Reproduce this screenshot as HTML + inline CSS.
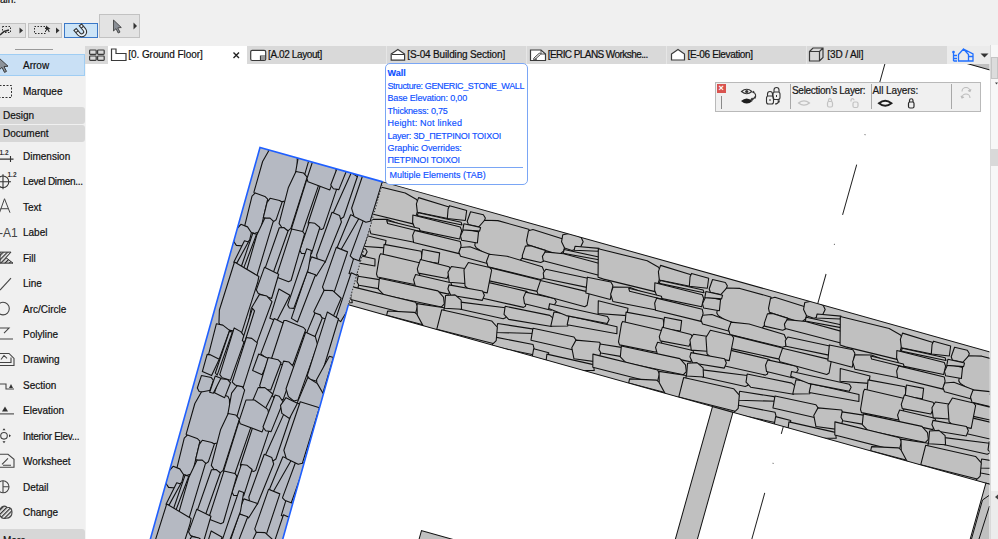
<!DOCTYPE html><html><head><meta charset="utf-8"><style>
html,body{margin:0;padding:0}
body{width:998px;height:539px;overflow:hidden;position:relative;background:#f0f0f0;font-family:"Liberation Sans",sans-serif}
.a{position:absolute}
.btn{position:absolute;background:#e3e3e3;border:1px solid #c2c2c2;box-sizing:border-box}
.btn.sel{background:#cce4f7;border:1px solid #3a78c8}
.t{position:absolute;white-space:pre;font-size:10px;color:#111;line-height:12px;-webkit-text-stroke:0.2px #111}
.tt{position:absolute;white-space:pre;font-size:9px;color:#0d50ff;line-height:12px;letter-spacing:0px;-webkit-text-stroke:0.15px #0d50ff}
</style></head><body>
<div class="t" style="left:0;top:-6px;font-size:10px">ain:</div>
<div class="btn" style="left:-8px;top:23px;width:34px;height:15px"></div>
<div class="btn" style="left:28px;top:23px;width:34px;height:15px"></div>
<div class="btn sel" style="left:64px;top:23px;width:34px;height:15px"></div>
<div class="btn" style="left:99px;top:14px;width:41px;height:24px"></div>
<svg class="a" style="left:0;top:0" width="150" height="45">
<g fill="#333"><path d="M19.5,27.5 l3.5,3 l-3.5,3z"/><path d="M56,27.5 l3.5,3 l-3.5,3z"/><path d="M133.5,22.5 l3.5,3.5 l-3.5,3.5z"/></g>
<g fill="none" stroke="#2e2e2e" stroke-width="1" stroke-dasharray="1.5 1.5">
<rect x="2.5" y="26.5" width="8" height="6"/>
<rect x="34.5" y="26.5" width="11" height="7"/>
</g>
<path d="M0,35 L4,31.5 L9,30" stroke="#2e2e2e" stroke-width="1.5" fill="none"/>
<path d="M46,25.5 l0,5.5 l1.5,-1.3 l1.3,2.5 l1,-0.5 l-1.3,-2.4 l2,-0.2z" fill="#2e2e2e"/>
<g transform="rotate(-40 81 31)"><path d="M76,26 v6 a5,5 0 0 0 10,0 v-6 h-3 v6 a2,2 0 0 1 -4,0 v-6z" fill="#e8f2fb" stroke="#333" stroke-width="1.1"/><path d="M76,29 h3 M83,29 h3" stroke="#333" stroke-width="1"/></g>
<path d="M113.5,20 l0,11 l2.5,-2.3 l2.2,4.3 l1.8,-0.9 l-2.2,-4.2 l3.5,-0.4z" fill="#8a8f96" stroke="#333" stroke-width="0.8"/>
</svg>
<div class="a" style="left:0;top:45px;width:85px;height:494px;background:#f0f0f0"></div>
<div class="a" style="left:15px;top:49px;width:38px;height:1px;background:#9a9a9a"></div>
<div class="a" style="left:0;top:53.5px;width:85px;height:22.5px;background:#c9e0f5;border:1px solid #9fcdf3;border-left:none;box-sizing:border-box"></div>
<div class="a" style="left:0;top:107px;width:85px;height:16.7px;background:#d7d7d7;border-radius:0 3px 3px 0"></div>
<div class="a" style="left:0;top:125px;width:85px;height:16.5px;background:#d7d7d7;border-radius:0 3px 3px 0"></div>
<div class="a" style="left:0;top:529px;width:85px;height:16px;background:#d7d7d7;border-radius:0 3px 3px 0"></div>
<div class="t" style="left:23px;top:60.3px;">Arrow</div>

<div class="t" style="left:23px;top:85.5px;">Marquee</div>

<div class="t" style="left:3px;top:110.1px;">Design</div>

<div class="t" style="left:3px;top:127.8px;">Document</div>

<div class="t" style="left:3px;top:535.4px;">More</div>

<div class="t" style="left:23px;top:150.7px;">Dimension</div>

<div class="t" style="left:23px;top:176.2px;letter-spacing:-0.3px">Level Dimen...</div>

<div class="t" style="left:23px;top:201.6px;">Text</div>

<div class="t" style="left:23px;top:227.1px;">Label</div>

<div class="t" style="left:23px;top:252.5px;">Fill</div>

<div class="t" style="left:23px;top:278.0px;">Line</div>

<div class="t" style="left:23px;top:303.5px;">Arc/Circle</div>

<div class="t" style="left:23px;top:328.9px;">Polyline</div>

<div class="t" style="left:23px;top:354.4px;">Drawing</div>

<div class="t" style="left:23px;top:379.8px;">Section</div>

<div class="t" style="left:23px;top:405.3px;">Elevation</div>

<div class="t" style="left:23px;top:430.8px;letter-spacing:-0.3px">Interior Elev...</div>

<div class="t" style="left:23px;top:456.2px;">Worksheet</div>

<div class="t" style="left:23px;top:481.7px;">Detail</div>

<div class="t" style="left:23px;top:507.1px;">Change</div>

<svg class="a" style="left:0;top:0" width="85" height="539"><path d="M-1,58 l0,12 l3,-2.6 l2.5,5 l2,-1 l-2.5,-4.8 l4,-0.4z" fill="#8c9299" stroke="#2f2f2f" stroke-width="0.9"/><rect x="-0.5" y="85.5" width="12" height="12" fill="none" stroke="#333" stroke-dasharray="2 1.5"/><text x="-0.5" y="155.3" font-size="6.5" font-weight="bold" fill="#333">1.2</text><path d="M0,159.10000000000002 H13.5 M10.5,156.10000000000002 V162.10000000000002" stroke="#333" stroke-width="1.1"/><circle cx="3" cy="181.76000000000002" r="5.8" fill="none" stroke="#333" stroke-width="1.1"/><path d="M3,174.26000000000002 V189.26000000000002 M-4,181.76000000000002 H11" stroke="#333" stroke-width="1.1"/><text x="7.5" y="176.76000000000002" font-size="6.5" font-weight="bold" fill="#333">1.2</text><path d="M-0.5,212.72000000000003 L4.5,198.72000000000003 L10,212.72000000000003 M0.5,208.72000000000003 L8.5,208.72000000000003" fill="none" stroke="#444" stroke-width="1"/><text x="-1" y="237.18" font-size="12" fill="#444">-A1</text><defs><pattern id="hp" width="3" height="3" patternUnits="userSpaceOnUse" patternTransform="rotate(45)"><rect width="1.3" height="3" fill="#333"/></pattern></defs><path d="M0,252.14 H11 L6,257.64 L13,263.14 H0z" fill="url(#hp)" stroke="#333" stroke-width="1"/><path d="M0,290.1 L11,278.1" stroke="#444" stroke-width="1.1"/><circle cx="3" cy="308.56" r="6.3" fill="none" stroke="#444" stroke-width="1.1"/><path d="M0,328.02 H9 L4,333.02 M0,339.02 H13" fill="none" stroke="#444" stroke-width="1.1"/><path d="M0,353.48 H9 L14,358.48 V365.48 H0 M0,362.48 H11 V357.48 M1,359.48 L4,355.48 L7,358.48" fill="none" stroke="#444" stroke-width="1.1"/><path d="M0,383.94000000000005 H6 V388.94000000000005 H14" fill="none" stroke="#444" stroke-width="1.1"/><path d="M9,387.94000000000005 L11,383.94000000000005 L13,387.94000000000005z" fill="#333"/><path d="M2,411.40000000000003 L5,406.40000000000003 L8,411.40000000000003z" fill="#333"/><path d="M0,413.90000000000003 H14" stroke="#444" stroke-width="1.1"/><circle cx="4" cy="435.86" r="3.3" fill="none" stroke="#444" stroke-width="1.1"/><path d="M2.5,430.36 L4,428.36 L5.5,430.36z M2.5,441.36 L4,443.36 L5.5,441.36z M9,434.36 L11,435.86 L9,437.36z" fill="#333"/><path d="M0,454.32 H8 L14,459.32 V467.32 H0 M2,464.32 L8,458.32 M3,465.32 H11" fill="none" stroke="#444" stroke-width="1.1"/><circle cx="3" cy="486.78000000000003" r="6" fill="none" stroke="#444" stroke-width="1.1"/><path d="M3,480.78000000000003 V492.78000000000003 M3,486.78000000000003 H9" stroke="#444" stroke-width="1.1"/><path d="M0,509.24 Q3,504.24 7,507.24 Q12,507.24 12,512.24 Q12,518.24 6,518.24 Q1,519.24 0,515.24" fill="url(#hp)" stroke="#444" stroke-width="1.1"/></svg>
<div class="a" style="left:85px;top:45.5px;width:862px;height:18.5px;background:#d9d9d9"></div>
<div class="a" style="left:947px;top:45.5px;width:43px;height:18.5px;background:#ebebeb"></div>
<div class="a" style="left:108px;top:45.5px;width:139px;height:18.5px;background:#fff"></div>
<div class="a" style="left:386px;top:46px;width:1px;height:18px;background:#e6e6e6"></div>
<div class="a" style="left:526px;top:46px;width:1px;height:18px;background:#e6e6e6"></div>
<div class="a" style="left:666px;top:46px;width:1px;height:18px;background:#e6e6e6"></div>
<div class="a" style="left:806px;top:46px;width:1px;height:18px;background:#e6e6e6"></div>
<div class="t" style="left:128.3px;top:49.3px;letter-spacing:-0.07px">[0. Ground Floor]</div>
<div class="t" style="left:268px;top:49.3px;letter-spacing:-0.39px">[A.02 Layout]</div>
<div class="t" style="left:407.3px;top:49.3px;letter-spacing:-0.15px">[S-04 Building Section]</div>
<div class="t" style="left:547.7px;top:49.3px;letter-spacing:-0.57px">[ERIC PLANS Workshe...</div>
<div class="t" style="left:687.5px;top:49.3px;letter-spacing:-0.34px">[E-06 Elevation]</div>
<div class="t" style="left:827.3px;top:49.3px;letter-spacing:-0.12px">[3D / All]</div>
<svg class="a" style="left:85px;top:44px" width="913" height="22">
<g fill="none" stroke="#3a3a3a" stroke-width="1.2">
<rect x="4.6" y="6" width="6.6" height="4.4" rx="0.8"/><rect x="12.6" y="6" width="6.6" height="4.4" rx="0.8"/>
<rect x="4.6" y="12" width="6.6" height="4.4" rx="0.8"/><rect x="12.6" y="12" width="6.6" height="4.4" rx="0.8"/>
<path d="M26.5,5 h4.5 v4.5 h10 v7 h-14.5z"/>
<rect x="165.7" y="6.3" width="15" height="10.2" rx="1.5" fill="#fff"/><path d="M175.5,16.5 v-4.5 h5.2" />
<path d="M306.2,10 l6.7,-4.5 l6.7,4.5 v6.2 h-13.4z" fill="#fff"/>
<path d="M445.5,6 h10.5 l4.5,4 v6.5 h-15z" fill="#fff"/><path d="M456,6 v4 h4.5" stroke-width="0.9"/>
<path d="M586.5,10 l6.5,-4.5 l6.5,4.5 v6 h-13z" fill="#fff"/>
<path d="M724.5,7.5 l3.5,-3.5 h10 v9.5 l-3.5,3.5 h-10z M724.5,7.5 h10 v9.5 M734.5,7.5 l3.5,-3.5"/>
</g>
<path d="M176,12.5 h4 v3.5 h-4z" fill="#9a9a9a"/>
<path d="M307,10.5 h12 M448.5,14.5 l6,-5.5 M454.5,9 l1.2,1.2 l-6,5.5 M448,15.2 h4" stroke="#3a3a3a" stroke-width="1" fill="none"/>
<path d="M148.5,8.5 l5.5,5.5 M154,8.5 l-5.5,5.5" stroke="#222" stroke-width="1.4"/>
<g fill="none" stroke="#1f6fff" stroke-width="1.3">
<path d="M868.5,8 v9 M868.5,11.5 h3.5 M868.5,14.5 h3.5 M868.5,17 h3.5"/>
<path d="M873.5,10.5 l5,-5.5 l5,5.5 v6.5 h-10z M878.5,5 l9.5,5 v7 h-4.5 M883.5,12.5 h4.5"/>
</g>
<circle cx="868.5" cy="8" r="1.3" fill="#1f6fff"/>
<path d="M895.5,9.5 h8 l-4,4z" fill="#333"/>
</svg>
<div class="a" style="left:85px;top:64px;width:904.5px;height:475px;background:#fff"></div>
<div class="a" style="left:85px;top:64px;width:0.8px;height:475px;background:#f4f4f4"></div>
<div class="a" style="left:989.5px;top:45px;width:8.5px;height:494px;background:#f7f7f7;border-left:1px solid #d9d9d9;box-sizing:border-box"></div>
<div class="a" style="left:991px;top:56.5px;width:7px;height:22px;background:#dcdcdc;border:1px solid #c4c4c4;box-sizing:border-box"></div>
<div class="a" style="left:990.5px;top:148.5px;width:7.5px;height:17.5px;background:#d9d9d9"></div>
<div class="a" style="left:990.5px;top:491px;width:7.5px;height:48px;background:#ececec"></div>
<svg class="a" style="left:990px;top:80px" width="8" height="425"><path d="M5,2.5 h3 l-1.5,2z" fill="#444"/><path d="M8,414.5 l-3,2.5 l3,2.5z" fill="#444"/></svg><svg width="998" height="539" style="position:absolute;left:0;top:0">
<defs><clipPath id="cv"><rect x="85" y="64" width="904.5" height="475"/></clipPath>
<clipPath id="hw"><rect x="127.5" y="0" width="700" height="127.5"/></clipPath>
<clipPath id="lw"><rect x="0" y="0" width="127.5" height="500"/></clipPath>
</defs>
<g clip-path="url(#cv)">
<g transform="translate(260.0,147.5) rotate(15.6422)">
<path d="M579.2,-400 V400" stroke="#222" stroke-width="1" fill="none" stroke-dasharray="52.4 30 0.8 30.47" stroke-dashoffset="85.5"/>
<rect x="127.5" y="0" width="700" height="127.5" fill="#c0c0c0"/>
<g clip-path="url(#hw)" fill="#c0c0c0" stroke="#111" stroke-width="1.1" stroke-linejoin="round">
<polygon points="-31.2,5.1 -18.1,4.5 -15.3,7.2 -15.9,17.1 -29.9,17.9 -31.9,15.1"/>
<polygon points="-15.4,9.5 -2.5,6.3 29.4,6.2 31.8,8.4 33.9,21.8 32.9,31.5 29.4,39.1 26.0,40.2 -4.0,42.0 -15.8,38.5 -18.1,36.3 -20.1,19.2"/>
<polygon points="29.7,7.7 33.6,5.4 64.3,6.4 68.6,9.2 69.1,17.8 66.4,21.5 63.0,22.7 32.3,21.3 30.5,17.9"/>
<polygon points="63.8,2.3 72.1,-1.7 82.3,0.1 85.3,3.6 84.1,10.4 76.8,15.0 69.1,14.7 64.5,9.4"/>
<polygon points="78.7,10.2 102.3,5.7 102.3,8.8 78.9,14.3"/>
<polygon points="30.9,23.4 35.6,21.6 51.3,22.1 52.4,33.1 50.0,35.0 31.3,36.0 30.4,33.1"/>
<polygon points="51.3,23.7 69.8,20.5 109.9,20.2 113.9,25.6 113.4,30.4 109.4,31.6 52.0,32.7 50.0,28.7"/>
<polygon points="69.1,16.2 104.6,14.1 105.3,16.8 69.2,20.1"/>
<polygon points="-33.1,22.9 -18.1,22.3 -16.2,33.4 -32.1,35.0 -34.4,31.1"/>
<polygon points="-31.0,42.2 -22.4,38.9 -1.5,40.9 1.0,47.1 -0.0,50.3 -28.9,50.6 -31.5,47.3"/>
<polygon points="-1.9,41.1 15.9,38.1 52.6,38.8 56.4,43.3 57.2,49.6 54.2,51.5 0.5,53.4 -2.5,48.7"/>
<polygon points="56.8,40.2 100.8,37.4 104.3,44.0 102.3,46.5 57.5,49.5 55.3,44.5"/>
<polygon points="2.5,53.7 54.6,52.2 56.7,54.3 55.7,63.7 5.4,66.6 3.5,63.4"/>
<polygon points="2.4,68.5 44.2,66.7 46.4,67.6 47.1,81.3 45.5,82.9 2.8,85.1 1.4,83.4"/>
<polygon points="43.6,67.6 72.9,66.0 75.6,68.6 73.0,78.2 45.6,79.2 42.9,73.3"/>
<polygon points="54.7,52.5 102.4,50.6 105.1,52.0 106.2,63.7 104.4,65.8 55.9,66.2 54.1,63.6"/>
<polygon points="98.9,36.6 122.8,34.9 125.7,37.7 127.0,51.9 101.7,52.2"/>
<polygon points="-18.4,95.1 28.1,88.2 31.3,91.6 31.5,97.3 29.1,99.3 -14.7,101.7 -18.4,98.6"/>
<polygon points="27.6,86.8 73.0,83.5 78.6,86.1 77.7,93.7 34.5,98.5 28.7,94.9"/>
<polygon points="76.1,79.2 91.3,77.4 93.3,88.9 76.9,93.7"/>
<polygon points="91.8,78.9 140.8,76.3 142.6,83.1 92.3,87.8"/>
<polygon points="69.7,72.3 128.8,69.1 131.3,71.5 130.5,75.9 88.9,79.3 70.1,77.3"/>
<polygon points="25.0,105.4 59.7,101.3 63.6,105.0 25.9,114.5"/>
<polygon points="60.3,100.4 102.1,97.8 105.9,101.0 105.3,110.4 61.6,112.5"/>
<polygon points="25.1,119.3 64.8,116.1 70.2,125.7 25.6,128.7"/>
<polygon points="66.5,120.1 82.1,119.7 83.0,127.4 67.4,129.3"/>
<polygon points="104.9,100.3 128.3,96.0 131.8,100.6 132.4,115.4 108.0,118.8 102.9,108.7"/>
<polygon points="80.7,121.6 128.3,119.2 130.7,124.6 83.2,137.9"/>
<polygon points="101.8,6.3 152.1,4.7 164.8,7.8 169.5,12.7 167.9,32.3 115.1,34.1 109.2,33.7"/>
<polygon points="166.2,5.5 198.1,6.3 200.8,8.8 200.0,17.7 169.0,20.0 165.8,12.1"/>
<polygon points="-53.1,4.9 -35.3,4.9 -33.9,14.9 -51.8,17.8 -53.6,8.5"/>
<polygon points="170.0,20.1 213.9,17.8 215.4,20.1 169.8,23.2"/>
<polygon points="165.4,23.8 214.3,22.5 216.6,25.7 216.9,34.3 171.9,37.4 167.2,31.1"/>
<polygon points="-34.4,18.5 -17.3,17.5 -17.3,21.3 -33.8,24.6"/>
<polygon points="126.3,39.1 142.1,34.9 173.2,37.7 175.3,49.5 130.0,53.1 125.9,46.7"/>
<polygon points="141.7,36.1 175.3,35.0 177.0,37.7 143.4,38.8"/>
<polygon points="171.3,38.1 218.2,36.5 220.1,40.2 220.3,48.5 173.5,50.1 170.7,43.5"/>
<polygon points="115.8,56.4 146.4,55.5 147.3,63.0 119.0,68.7"/>
<polygon points="145.6,59.8 183.2,56.4 186.1,63.3 185.7,69.9 147.8,71.8"/>
<polygon points="183.9,54.4 201.4,53.0 203.0,63.3 185.8,65.7"/>
<polygon points="144.8,69.7 184.5,68.0 188.1,70.3 187.9,88.2 184.5,90.4 148.1,93.1 146.3,90.4 144.3,71.9"/>
<polygon points="184.7,64.5 214.2,63.9 216.9,66.4 215.3,75.7 186.3,78.3 184.2,74.5"/>
<polygon points="184.1,80.3 220.3,78.7 222.1,81.5 221.3,90.3 187.3,92.3 183.5,85.8"/>
<polygon points="-34.9,63.0 -19.9,61.1 -16.2,66.0 -17.2,75.7 -32.7,78.8 -36.7,69.4"/>
<polygon points="-19.6,54.6 2.1,53.6 4.8,55.5 6.7,78.7 -12.5,80.3 -16.5,78.1 -21.9,62.8"/>
<polygon points="129.2,97.6 150.6,95.0 152.5,98.0 151.9,104.0 132.4,106.0 129.6,103.2"/>
<polygon points="150.2,93.8 210.0,90.1 217.0,94.5 219.7,100.9 217.7,104.6 159.0,108.6 152.1,104.4"/>
<polygon points="-32.3,81.3 1.7,78.2 4.6,81.8 4.0,87.3 -27.8,90.9 -32.2,85.6"/>
<polygon points="125.0,109.2 191.6,107.0 194.5,110.4 194.5,117.8 189.3,120.5 128.4,121.8"/>
<polygon points="-32.7,92.5 -23.8,89.3 -16.5,92.7 -13.6,101.4 -30.3,105.0"/>
<polygon points="167.0,123.1 193.2,117.1 205.4,122.0 207.6,126.7 167.2,127.3"/>
<polygon points="-58.0,108.0 -30.7,104.7 -27.6,127.7 -44.9,129.0 -54.7,118.9"/>
<polygon points="-32.6,107.3 18.5,104.6 25.7,109.1 28.2,122.2 26.1,125.9 -32.1,127.4"/>
<polygon points="220.1,5.1 233.2,4.5 236.0,7.2 235.4,17.1 221.4,17.9 219.4,15.1"/>
<polygon points="235.9,9.5 248.8,6.3 280.7,6.2 283.1,8.4 285.2,21.8 284.2,31.5 280.7,39.1 277.3,40.2 247.3,42.0 235.5,38.5 233.2,36.3 231.2,19.2"/>
<polygon points="281.0,7.7 284.9,5.4 315.6,6.4 319.9,9.2 320.4,17.8 317.7,21.5 314.3,22.7 283.6,21.3 281.8,17.9"/>
<polygon points="315.1,2.3 323.4,-1.7 333.6,0.1 336.6,3.6 335.4,10.4 328.1,15.0 320.4,14.7 315.8,9.4"/>
<polygon points="330.0,10.2 353.6,5.7 353.6,8.8 330.2,14.3"/>
<polygon points="282.2,23.4 286.9,21.6 302.6,22.1 303.7,33.1 301.3,35.0 282.6,36.0 281.7,33.1"/>
<polygon points="302.6,23.7 321.1,20.5 361.2,20.2 365.2,25.6 364.7,30.4 360.7,31.6 303.3,32.7 301.3,28.7"/>
<polygon points="320.4,16.2 355.9,14.1 356.6,16.8 320.5,20.1"/>
<polygon points="218.2,22.9 233.2,22.3 235.1,33.4 219.2,35.0 216.9,31.1"/>
<polygon points="220.3,42.2 228.9,38.9 249.8,40.9 252.3,47.1 251.3,50.3 222.4,50.6 219.8,47.3"/>
<polygon points="249.4,41.1 267.2,38.1 303.9,38.8 307.7,43.3 308.5,49.6 305.5,51.5 251.8,53.4 248.8,48.7"/>
<polygon points="308.1,40.2 352.1,37.4 355.6,44.0 353.6,46.5 308.8,49.5 306.6,44.5"/>
<polygon points="253.8,53.7 305.9,52.2 308.0,54.3 307.0,63.7 256.7,66.6 254.8,63.4"/>
<polygon points="253.7,68.5 295.5,66.7 297.7,67.6 298.4,81.3 296.8,82.9 254.1,85.1 252.7,83.4"/>
<polygon points="294.9,67.6 324.2,66.0 326.9,68.6 324.3,78.2 296.9,79.2 294.2,73.3"/>
<polygon points="306.0,52.5 353.7,50.6 356.4,52.0 357.5,63.7 355.7,65.8 307.2,66.2 305.4,63.6"/>
<polygon points="350.2,36.6 374.1,34.9 377.0,37.7 378.3,51.9 353.0,52.2"/>
<polygon points="232.9,95.1 279.4,88.2 282.6,91.6 282.8,97.3 280.4,99.3 236.6,101.7 232.9,98.6"/>
<polygon points="278.9,86.8 324.3,83.5 329.9,86.1 329.0,93.7 285.8,98.5 280.0,94.9"/>
<polygon points="327.4,79.2 342.6,77.4 344.6,88.9 328.2,93.7"/>
<polygon points="343.1,78.9 392.1,76.3 393.9,83.1 343.6,87.8"/>
<polygon points="321.0,72.3 380.1,69.1 382.6,71.5 381.8,75.9 340.2,79.3 321.4,77.3"/>
<polygon points="276.3,105.4 311.0,101.3 314.9,105.0 277.2,114.5"/>
<polygon points="311.6,100.4 353.4,97.8 357.2,101.0 356.6,110.4 312.9,112.5"/>
<polygon points="276.4,119.3 316.1,116.1 321.5,125.7 276.9,128.7"/>
<polygon points="317.8,120.1 333.4,119.7 334.3,127.4 318.7,129.3"/>
<polygon points="356.2,100.3 379.6,96.0 383.1,100.6 383.7,115.4 359.3,118.8 354.2,108.7"/>
<polygon points="332.0,121.6 379.6,119.2 382.0,124.6 334.5,137.9"/>
<polygon points="353.1,6.3 403.4,4.7 416.1,7.8 420.8,12.7 419.2,32.3 366.4,34.1 360.5,33.7"/>
<polygon points="417.5,5.5 449.4,6.3 452.1,8.8 451.3,17.7 420.3,20.0 417.1,12.1"/>
<polygon points="198.2,4.9 216.0,4.9 217.4,14.9 199.5,17.8 197.7,8.5"/>
<polygon points="421.3,20.1 465.2,17.8 466.7,20.1 421.1,23.2"/>
<polygon points="416.7,23.8 465.6,22.5 467.9,25.7 468.2,34.3 423.2,37.4 418.5,31.1"/>
<polygon points="216.9,18.5 234.0,17.5 234.0,21.3 217.5,24.6"/>
<polygon points="377.6,39.1 393.4,34.9 424.5,37.7 426.6,49.5 381.3,53.1 377.2,46.7"/>
<polygon points="393.0,36.1 426.6,35.0 428.3,37.7 394.7,38.8"/>
<polygon points="422.6,38.1 469.5,36.5 471.4,40.2 471.6,48.5 424.8,50.1 422.0,43.5"/>
<polygon points="367.1,56.4 397.7,55.5 398.6,63.0 370.3,68.7"/>
<polygon points="396.9,59.8 434.5,56.4 437.4,63.3 437.0,69.9 399.1,71.8"/>
<polygon points="435.2,54.4 452.7,53.0 454.3,63.3 437.1,65.7"/>
<polygon points="396.1,69.7 435.8,68.0 439.4,70.3 439.2,88.2 435.8,90.4 399.4,93.1 397.6,90.4 395.6,71.9"/>
<polygon points="436.0,64.5 465.5,63.9 468.2,66.4 466.6,75.7 437.6,78.3 435.5,74.5"/>
<polygon points="435.4,80.3 471.6,78.7 473.4,81.5 472.6,90.3 438.6,92.3 434.8,85.8"/>
<polygon points="216.4,63.0 231.4,61.1 235.1,66.0 234.1,75.7 218.6,78.8 214.6,69.4"/>
<polygon points="231.7,54.6 253.4,53.6 256.1,55.5 258.0,78.7 238.8,80.3 234.8,78.1 229.4,62.8"/>
<polygon points="380.5,97.6 401.9,95.0 403.8,98.0 403.2,104.0 383.7,106.0 380.9,103.2"/>
<polygon points="401.5,93.8 461.3,90.1 468.3,94.5 471.0,100.9 469.0,104.6 410.3,108.6 403.4,104.4"/>
<polygon points="219.0,81.3 253.0,78.2 255.9,81.8 255.3,87.3 223.5,90.9 219.1,85.6"/>
<polygon points="376.3,109.2 442.9,107.0 445.8,110.4 445.8,117.8 440.6,120.5 379.7,121.8"/>
<polygon points="218.6,92.5 227.5,89.3 234.8,92.7 237.7,101.4 221.0,105.0"/>
<polygon points="418.3,123.1 444.5,117.1 456.7,122.0 458.9,126.7 418.5,127.3"/>
<polygon points="193.3,108.0 220.6,104.7 223.7,127.7 206.4,129.0 196.6,118.9"/>
<polygon points="218.7,107.3 269.8,104.6 277.0,109.1 279.5,122.2 277.4,125.9 219.2,127.4"/>
<polygon points="471.4,5.1 484.5,4.5 487.3,7.2 486.7,17.1 472.7,17.9 470.7,15.1"/>
<polygon points="487.2,9.5 500.1,6.3 532.0,6.2 534.4,8.4 536.5,21.8 535.5,31.5 532.0,39.1 528.6,40.2 498.6,42.0 486.8,38.5 484.5,36.3 482.5,19.2"/>
<polygon points="532.3,7.7 536.2,5.4 566.9,6.4 571.2,9.2 571.7,17.8 569.0,21.5 565.6,22.7 534.9,21.3 533.1,17.9"/>
<polygon points="566.4,2.3 574.7,-1.7 584.9,0.1 587.9,3.6 586.7,10.4 579.4,15.0 571.7,14.7 567.1,9.4"/>
<polygon points="581.3,10.2 604.9,5.7 604.9,8.8 581.5,14.3"/>
<polygon points="533.5,23.4 538.2,21.6 553.9,22.1 555.0,33.1 552.6,35.0 533.9,36.0 533.0,33.1"/>
<polygon points="553.9,23.7 572.4,20.5 612.5,20.2 616.5,25.6 616.0,30.4 612.0,31.6 554.6,32.7 552.6,28.7"/>
<polygon points="571.7,16.2 607.2,14.1 607.9,16.8 571.8,20.1"/>
<polygon points="469.5,22.9 484.5,22.3 486.4,33.4 470.5,35.0 468.2,31.1"/>
<polygon points="471.6,42.2 480.2,38.9 501.1,40.9 503.6,47.1 502.6,50.3 473.7,50.6 471.1,47.3"/>
<polygon points="500.7,41.1 518.5,38.1 555.2,38.8 559.0,43.3 559.8,49.6 556.8,51.5 503.1,53.4 500.1,48.7"/>
<polygon points="559.4,40.2 603.4,37.4 606.9,44.0 604.9,46.5 560.1,49.5 557.9,44.5"/>
<polygon points="505.1,53.7 557.2,52.2 559.3,54.3 558.3,63.7 508.0,66.6 506.1,63.4"/>
<polygon points="505.0,68.5 546.8,66.7 549.0,67.6 549.7,81.3 548.1,82.9 505.4,85.1 504.0,83.4"/>
<polygon points="546.2,67.6 575.5,66.0 578.2,68.6 575.6,78.2 548.2,79.2 545.5,73.3"/>
<polygon points="557.3,52.5 605.0,50.6 607.7,52.0 608.8,63.7 607.0,65.8 558.5,66.2 556.7,63.6"/>
<polygon points="601.5,36.6 625.4,34.9 628.3,37.7 629.6,51.9 604.3,52.2"/>
<polygon points="484.2,95.1 530.7,88.2 533.9,91.6 534.1,97.3 531.7,99.3 487.9,101.7 484.2,98.6"/>
<polygon points="530.2,86.8 575.6,83.5 581.2,86.1 580.3,93.7 537.1,98.5 531.3,94.9"/>
<polygon points="578.7,79.2 593.9,77.4 595.9,88.9 579.5,93.7"/>
<polygon points="594.4,78.9 643.4,76.3 645.2,83.1 594.9,87.8"/>
<polygon points="572.3,72.3 631.4,69.1 633.9,71.5 633.1,75.9 591.5,79.3 572.7,77.3"/>
<polygon points="527.6,105.4 562.3,101.3 566.2,105.0 528.5,114.5"/>
<polygon points="562.9,100.4 604.7,97.8 608.5,101.0 607.9,110.4 564.2,112.5"/>
<polygon points="527.7,119.3 567.4,116.1 572.8,125.7 528.2,128.7"/>
<polygon points="569.1,120.1 584.7,119.7 585.6,127.4 570.0,129.3"/>
<polygon points="607.5,100.3 630.9,96.0 634.4,100.6 635.0,115.4 610.6,118.8 605.5,108.7"/>
<polygon points="583.3,121.6 630.9,119.2 633.3,124.6 585.8,137.9"/>
<polygon points="604.4,6.3 654.7,4.7 667.4,7.8 672.1,12.7 670.5,32.3 617.7,34.1 611.8,33.7"/>
<polygon points="668.8,5.5 700.7,6.3 703.4,8.8 702.6,17.7 671.6,20.0 668.4,12.1"/>
<polygon points="449.5,4.9 467.3,4.9 468.7,14.9 450.8,17.8 449.0,8.5"/>
<polygon points="672.6,20.1 716.5,17.8 718.0,20.1 672.4,23.2"/>
<polygon points="668.0,23.8 716.9,22.5 719.2,25.7 719.5,34.3 674.5,37.4 669.8,31.1"/>
<polygon points="468.2,18.5 485.3,17.5 485.3,21.3 468.8,24.6"/>
<polygon points="628.9,39.1 644.7,34.9 675.8,37.7 677.9,49.5 632.6,53.1 628.5,46.7"/>
<polygon points="644.3,36.1 677.9,35.0 679.6,37.7 646.0,38.8"/>
<polygon points="673.9,38.1 720.8,36.5 722.7,40.2 722.9,48.5 676.1,50.1 673.3,43.5"/>
<polygon points="618.4,56.4 649.0,55.5 649.9,63.0 621.6,68.7"/>
<polygon points="648.2,59.8 685.8,56.4 688.7,63.3 688.3,69.9 650.4,71.8"/>
<polygon points="686.5,54.4 704.0,53.0 705.6,63.3 688.4,65.7"/>
<polygon points="647.4,69.7 687.1,68.0 690.7,70.3 690.5,88.2 687.1,90.4 650.7,93.1 648.9,90.4 646.9,71.9"/>
<polygon points="687.3,64.5 716.8,63.9 719.5,66.4 717.9,75.7 688.9,78.3 686.8,74.5"/>
<polygon points="686.7,80.3 722.9,78.7 724.7,81.5 723.9,90.3 689.9,92.3 686.1,85.8"/>
<polygon points="467.7,63.0 482.7,61.1 486.4,66.0 485.4,75.7 469.9,78.8 465.9,69.4"/>
<polygon points="483.0,54.6 504.7,53.6 507.4,55.5 509.3,78.7 490.1,80.3 486.1,78.1 480.7,62.8"/>
<polygon points="631.8,97.6 653.2,95.0 655.1,98.0 654.5,104.0 635.0,106.0 632.2,103.2"/>
<polygon points="652.8,93.8 712.6,90.1 719.6,94.5 722.3,100.9 720.3,104.6 661.6,108.6 654.7,104.4"/>
<polygon points="470.3,81.3 504.3,78.2 507.2,81.8 506.6,87.3 474.8,90.9 470.4,85.6"/>
<polygon points="627.6,109.2 694.2,107.0 697.1,110.4 697.1,117.8 691.9,120.5 631.0,121.8"/>
<polygon points="469.9,92.5 478.8,89.3 486.1,92.7 489.0,101.4 472.3,105.0"/>
<polygon points="669.6,123.1 695.8,117.1 708.0,122.0 710.2,126.7 669.8,127.3"/>
<polygon points="444.6,108.0 471.9,104.7 475.0,127.7 457.7,129.0 447.9,118.9"/>
<polygon points="470.0,107.3 521.1,104.6 528.3,109.1 530.8,122.2 528.7,125.9 470.5,127.4"/>
<polygon points="722.7,5.1 735.8,4.5 738.6,7.2 738.0,17.1 724.0,17.9 722.0,15.1"/>
<polygon points="738.5,9.5 751.4,6.3 783.3,6.2 785.7,8.4 787.8,21.8 786.8,31.5 783.3,39.1 779.9,40.2 749.9,42.0 738.1,38.5 735.8,36.3 733.8,19.2"/>
<polygon points="783.6,7.7 787.5,5.4 818.2,6.4 822.5,9.2 823.0,17.8 820.3,21.5 816.9,22.7 786.2,21.3 784.4,17.9"/>
<polygon points="817.7,2.3 826.0,-1.7 836.2,0.1 839.2,3.6 838.0,10.4 830.7,15.0 823.0,14.7 818.4,9.4"/>
<polygon points="832.6,10.2 856.2,5.7 856.2,8.8 832.8,14.3"/>
<polygon points="784.8,23.4 789.5,21.6 805.2,22.1 806.3,33.1 803.9,35.0 785.2,36.0 784.3,33.1"/>
<polygon points="805.2,23.7 823.7,20.5 863.8,20.2 867.8,25.6 867.3,30.4 863.3,31.6 805.9,32.7 803.9,28.7"/>
<polygon points="823.0,16.2 858.5,14.1 859.2,16.8 823.1,20.1"/>
<polygon points="720.8,22.9 735.8,22.3 737.7,33.4 721.8,35.0 719.5,31.1"/>
<polygon points="722.9,42.2 731.5,38.9 752.4,40.9 754.9,47.1 753.9,50.3 725.0,50.6 722.4,47.3"/>
<polygon points="752.0,41.1 769.8,38.1 806.5,38.8 810.3,43.3 811.1,49.6 808.1,51.5 754.4,53.4 751.4,48.7"/>
<polygon points="810.7,40.2 854.7,37.4 858.2,44.0 856.2,46.5 811.4,49.5 809.2,44.5"/>
<polygon points="756.4,53.7 808.5,52.2 810.6,54.3 809.6,63.7 759.3,66.6 757.4,63.4"/>
<polygon points="756.3,68.5 798.1,66.7 800.3,67.6 801.0,81.3 799.4,82.9 756.7,85.1 755.3,83.4"/>
<polygon points="797.5,67.6 826.8,66.0 829.5,68.6 826.9,78.2 799.5,79.2 796.8,73.3"/>
<polygon points="808.6,52.5 856.3,50.6 859.0,52.0 860.1,63.7 858.3,65.8 809.8,66.2 808.0,63.6"/>
<polygon points="852.8,36.6 876.7,34.9 879.6,37.7 880.9,51.9 855.6,52.2"/>
<polygon points="735.5,95.1 782.0,88.2 785.2,91.6 785.4,97.3 783.0,99.3 739.2,101.7 735.5,98.6"/>
<polygon points="781.5,86.8 826.9,83.5 832.5,86.1 831.6,93.7 788.4,98.5 782.6,94.9"/>
<polygon points="830.0,79.2 845.2,77.4 847.2,88.9 830.8,93.7"/>
<polygon points="845.7,78.9 894.7,76.3 896.5,83.1 846.2,87.8"/>
<polygon points="823.6,72.3 882.7,69.1 885.2,71.5 884.4,75.9 842.8,79.3 824.0,77.3"/>
<polygon points="778.9,105.4 813.6,101.3 817.5,105.0 779.8,114.5"/>
<polygon points="814.2,100.4 856.0,97.8 859.8,101.0 859.2,110.4 815.5,112.5"/>
<polygon points="779.0,119.3 818.7,116.1 824.1,125.7 779.5,128.7"/>
<polygon points="820.4,120.1 836.0,119.7 836.9,127.4 821.3,129.3"/>
<polygon points="858.8,100.3 882.2,96.0 885.7,100.6 886.3,115.4 861.9,118.8 856.8,108.7"/>
<polygon points="834.6,121.6 882.2,119.2 884.6,124.6 837.1,137.9"/>
<polygon points="855.7,6.3 906.0,4.7 918.7,7.8 923.4,12.7 921.8,32.3 869.0,34.1 863.1,33.7"/>
<polygon points="920.1,5.5 952.0,6.3 954.7,8.8 953.9,17.7 922.9,20.0 919.7,12.1"/>
<polygon points="700.8,4.9 718.6,4.9 720.0,14.9 702.1,17.8 700.3,8.5"/>
<polygon points="923.9,20.1 967.8,17.8 969.3,20.1 923.7,23.2"/>
<polygon points="919.3,23.8 968.2,22.5 970.5,25.7 970.8,34.3 925.8,37.4 921.1,31.1"/>
<polygon points="719.5,18.5 736.6,17.5 736.6,21.3 720.1,24.6"/>
<polygon points="880.2,39.1 896.0,34.9 927.1,37.7 929.2,49.5 883.9,53.1 879.8,46.7"/>
<polygon points="895.6,36.1 929.2,35.0 930.9,37.7 897.3,38.8"/>
<polygon points="925.2,38.1 972.1,36.5 974.0,40.2 974.2,48.5 927.4,50.1 924.6,43.5"/>
<polygon points="869.7,56.4 900.3,55.5 901.2,63.0 872.9,68.7"/>
<polygon points="899.5,59.8 937.1,56.4 940.0,63.3 939.6,69.9 901.7,71.8"/>
<polygon points="937.8,54.4 955.3,53.0 956.9,63.3 939.7,65.7"/>
<polygon points="898.7,69.7 938.4,68.0 942.0,70.3 941.8,88.2 938.4,90.4 902.0,93.1 900.2,90.4 898.2,71.9"/>
<polygon points="938.6,64.5 968.1,63.9 970.8,66.4 969.2,75.7 940.2,78.3 938.1,74.5"/>
<polygon points="938.0,80.3 974.2,78.7 976.0,81.5 975.2,90.3 941.2,92.3 937.4,85.8"/>
<polygon points="719.0,63.0 734.0,61.1 737.7,66.0 736.7,75.7 721.2,78.8 717.2,69.4"/>
<polygon points="734.3,54.6 756.0,53.6 758.7,55.5 760.6,78.7 741.4,80.3 737.4,78.1 732.0,62.8"/>
<polygon points="883.1,97.6 904.5,95.0 906.4,98.0 905.8,104.0 886.3,106.0 883.5,103.2"/>
<polygon points="904.1,93.8 963.9,90.1 970.9,94.5 973.6,100.9 971.6,104.6 912.9,108.6 906.0,104.4"/>
<polygon points="721.6,81.3 755.6,78.2 758.5,81.8 757.9,87.3 726.1,90.9 721.7,85.6"/>
<polygon points="878.9,109.2 945.5,107.0 948.4,110.4 948.4,117.8 943.2,120.5 882.3,121.8"/>
<polygon points="721.2,92.5 730.1,89.3 737.4,92.7 740.3,101.4 723.6,105.0"/>
<polygon points="920.9,123.1 947.1,117.1 959.3,122.0 961.5,126.7 921.1,127.3"/>
<polygon points="695.9,108.0 723.2,104.7 726.3,127.7 709.0,129.0 699.2,118.9"/>
<polygon points="721.3,107.3 772.4,104.6 779.6,109.1 782.1,122.2 780.0,125.9 721.8,127.4"/>
</g>
<path d="M127.5,0 H900 M127.5,127.5 H900" stroke="#111" stroke-width="1" fill="none"/>
<rect x="0" y="0" width="127.5" height="500" fill="#b5b9c2"/>
<g clip-path="url(#lw)" fill="#b5b9c2" stroke="#111" stroke-width="1.1" stroke-linejoin="round">
<polygon points="5.1,-769.8 4.5,-756.7 7.2,-753.9 17.1,-754.5 17.9,-768.5 15.1,-770.5"/>
<polygon points="9.5,-754.0 6.3,-741.1 6.2,-709.2 8.4,-706.8 21.8,-704.7 31.5,-705.7 39.1,-709.2 40.2,-712.6 42.0,-742.6 38.5,-754.4 36.3,-756.7 19.2,-758.7"/>
<polygon points="7.7,-708.9 5.4,-705.0 6.4,-674.3 9.2,-670.0 17.8,-669.5 21.5,-672.2 22.7,-675.6 21.3,-706.3 17.9,-708.1"/>
<polygon points="2.3,-674.8 -1.7,-666.5 0.1,-656.3 3.6,-653.3 10.4,-654.5 15.0,-661.8 14.7,-669.5 9.4,-674.1"/>
<polygon points="10.2,-659.9 5.7,-636.3 8.8,-636.3 14.3,-659.7"/>
<polygon points="23.4,-707.7 21.6,-703.0 22.1,-687.3 33.1,-686.2 35.0,-688.6 36.0,-707.3 33.1,-708.2"/>
<polygon points="23.7,-687.3 20.5,-668.8 20.2,-628.7 25.6,-624.7 30.4,-625.2 31.6,-629.2 32.7,-686.6 28.7,-688.6"/>
<polygon points="16.2,-669.5 14.1,-634.0 16.8,-633.3 20.1,-669.4"/>
<polygon points="22.9,-771.7 22.3,-756.7 33.4,-754.8 35.0,-770.7 31.1,-773.0"/>
<polygon points="42.2,-769.6 38.9,-761.0 40.9,-740.1 47.1,-737.6 50.3,-738.6 50.6,-767.5 47.3,-770.1"/>
<polygon points="41.1,-740.5 38.1,-722.7 38.8,-686.0 43.3,-682.2 49.6,-681.4 51.5,-684.4 53.4,-738.1 48.7,-741.1"/>
<polygon points="40.2,-681.8 37.4,-637.8 44.0,-634.3 46.5,-636.3 49.5,-681.1 44.5,-683.3"/>
<polygon points="53.7,-736.1 52.2,-684.0 54.3,-681.9 63.7,-682.9 66.6,-733.2 63.4,-735.1"/>
<polygon points="68.5,-736.2 66.7,-694.4 67.6,-692.2 81.3,-691.5 82.9,-693.1 85.1,-735.8 83.4,-737.2"/>
<polygon points="67.6,-695.0 66.0,-665.7 68.6,-663.0 78.2,-665.6 79.2,-693.0 73.3,-695.7"/>
<polygon points="52.5,-683.9 50.6,-636.2 52.0,-633.5 63.7,-632.4 65.8,-634.2 66.2,-682.7 63.6,-684.5"/>
<polygon points="36.6,-639.7 34.9,-615.8 37.7,-612.9 51.9,-611.6 52.2,-636.9"/>
<polygon points="95.1,-757.0 88.2,-710.5 91.6,-707.3 97.3,-707.1 99.3,-709.5 101.7,-753.3 98.6,-757.0"/>
<polygon points="86.8,-711.0 83.5,-665.6 86.1,-660.0 93.7,-660.9 98.5,-704.1 94.9,-709.9"/>
<polygon points="79.2,-662.5 77.4,-647.3 88.9,-645.3 93.7,-661.7"/>
<polygon points="78.9,-646.8 76.3,-597.8 83.1,-596.0 87.8,-646.3"/>
<polygon points="72.3,-668.9 69.1,-609.8 71.5,-607.3 75.9,-608.1 79.3,-649.7 77.3,-668.5"/>
<polygon points="105.4,-713.6 101.3,-678.9 105.0,-675.0 114.5,-712.7"/>
<polygon points="100.4,-678.3 97.8,-636.5 101.0,-632.7 110.4,-633.3 112.5,-677.0"/>
<polygon points="119.3,-713.5 116.1,-673.8 125.7,-668.4 128.7,-713.0"/>
<polygon points="120.1,-672.1 119.7,-656.5 127.4,-655.6 129.3,-671.2"/>
<polygon points="100.3,-633.7 96.0,-610.3 100.6,-606.8 115.4,-606.2 118.8,-630.6 108.7,-635.7"/>
<polygon points="121.6,-657.9 119.2,-610.3 124.6,-607.9 137.9,-655.4"/>
<polygon points="6.3,-636.8 4.7,-586.5 7.8,-573.8 12.7,-569.1 32.3,-570.7 34.1,-623.5 33.7,-629.4"/>
<polygon points="5.5,-572.4 6.3,-540.5 8.8,-537.8 17.7,-538.6 20.0,-569.6 12.1,-572.8"/>
<polygon points="4.9,-791.7 4.9,-773.9 14.9,-772.5 17.8,-790.4 8.5,-792.2"/>
<polygon points="20.1,-568.6 17.8,-524.7 20.1,-523.2 23.2,-568.8"/>
<polygon points="23.8,-573.2 22.5,-524.3 25.7,-522.0 34.3,-521.7 37.4,-566.7 31.1,-571.4"/>
<polygon points="18.5,-773.0 17.5,-755.9 21.3,-755.9 24.6,-772.4"/>
<polygon points="39.1,-612.3 34.9,-596.5 37.7,-565.4 49.5,-563.3 53.1,-608.6 46.7,-612.7"/>
<polygon points="36.1,-596.9 35.0,-563.3 37.7,-561.6 38.8,-595.2"/>
<polygon points="38.1,-567.3 36.5,-520.4 40.2,-518.5 48.5,-518.3 50.1,-565.1 43.5,-567.9"/>
<polygon points="56.4,-622.8 55.5,-592.2 63.0,-591.3 68.7,-619.6"/>
<polygon points="59.8,-593.0 56.4,-555.4 63.3,-552.5 69.9,-552.9 71.8,-590.8"/>
<polygon points="54.4,-554.7 53.0,-537.2 63.3,-535.6 65.7,-552.8"/>
<polygon points="69.7,-593.8 68.0,-554.1 70.3,-550.5 88.2,-550.7 90.4,-554.1 93.1,-590.5 90.4,-592.3 71.9,-594.3"/>
<polygon points="64.5,-553.9 63.9,-524.4 66.4,-521.7 75.7,-523.3 78.3,-552.3 74.5,-554.4"/>
<polygon points="80.3,-554.5 78.7,-518.3 81.5,-516.5 90.3,-517.3 92.3,-551.3 85.8,-555.1"/>
<polygon points="63.0,-773.5 61.1,-758.5 66.0,-754.8 75.7,-755.8 78.8,-771.3 69.4,-775.3"/>
<polygon points="54.6,-758.2 53.6,-736.5 55.5,-733.8 78.7,-731.9 80.3,-751.1 78.1,-755.1 62.8,-760.5"/>
<polygon points="97.6,-609.4 95.0,-588.0 98.0,-586.1 104.0,-586.7 106.0,-606.2 103.2,-609.0"/>
<polygon points="93.8,-588.4 90.1,-528.6 94.5,-521.6 100.9,-518.9 104.6,-520.9 108.6,-579.6 104.4,-586.5"/>
<polygon points="81.3,-770.9 78.2,-736.9 81.8,-734.0 87.3,-734.6 90.9,-766.4 85.6,-770.8"/>
<polygon points="109.2,-613.6 107.0,-547.0 110.4,-544.1 117.8,-544.1 120.5,-549.3 121.8,-610.2"/>
<polygon points="92.5,-771.3 89.3,-762.4 92.7,-755.1 101.4,-752.2 105.0,-768.9"/>
<polygon points="123.1,-571.6 117.1,-545.4 122.0,-533.2 126.7,-531.0 127.3,-571.4"/>
<polygon points="108.0,-796.6 104.7,-769.3 127.7,-766.2 129.0,-783.5 118.9,-793.3"/>
<polygon points="107.3,-771.2 104.6,-720.1 109.1,-712.9 122.2,-710.4 125.9,-712.5 127.4,-770.7"/>
<polygon points="5.1,-518.5 4.5,-505.4 7.2,-502.6 17.1,-503.2 17.9,-517.2 15.1,-519.2"/>
<polygon points="9.5,-502.7 6.3,-489.8 6.2,-457.9 8.4,-455.5 21.8,-453.4 31.5,-454.4 39.1,-457.9 40.2,-461.3 42.0,-491.3 38.5,-503.1 36.3,-505.4 19.2,-507.4"/>
<polygon points="7.7,-457.6 5.4,-453.7 6.4,-423.0 9.2,-418.7 17.8,-418.2 21.5,-420.9 22.7,-424.3 21.3,-455.0 17.9,-456.8"/>
<polygon points="2.3,-423.5 -1.7,-415.2 0.1,-405.0 3.6,-402.0 10.4,-403.2 15.0,-410.5 14.7,-418.2 9.4,-422.8"/>
<polygon points="10.2,-408.6 5.7,-385.0 8.8,-385.0 14.3,-408.4"/>
<polygon points="23.4,-456.4 21.6,-451.7 22.1,-436.0 33.1,-434.9 35.0,-437.3 36.0,-456.0 33.1,-456.9"/>
<polygon points="23.7,-436.0 20.5,-417.5 20.2,-377.4 25.6,-373.4 30.4,-373.9 31.6,-377.9 32.7,-435.3 28.7,-437.3"/>
<polygon points="16.2,-418.2 14.1,-382.7 16.8,-382.0 20.1,-418.1"/>
<polygon points="22.9,-520.4 22.3,-505.4 33.4,-503.5 35.0,-519.4 31.1,-521.7"/>
<polygon points="42.2,-518.3 38.9,-509.7 40.9,-488.8 47.1,-486.3 50.3,-487.3 50.6,-516.2 47.3,-518.8"/>
<polygon points="41.1,-489.2 38.1,-471.4 38.8,-434.7 43.3,-430.9 49.6,-430.1 51.5,-433.1 53.4,-486.8 48.7,-489.8"/>
<polygon points="40.2,-430.5 37.4,-386.5 44.0,-383.0 46.5,-385.0 49.5,-429.8 44.5,-432.0"/>
<polygon points="53.7,-484.8 52.2,-432.7 54.3,-430.6 63.7,-431.6 66.6,-481.9 63.4,-483.8"/>
<polygon points="68.5,-484.9 66.7,-443.1 67.6,-440.9 81.3,-440.2 82.9,-441.8 85.1,-484.5 83.4,-485.9"/>
<polygon points="67.6,-443.7 66.0,-414.4 68.6,-411.7 78.2,-414.3 79.2,-441.7 73.3,-444.4"/>
<polygon points="52.5,-432.6 50.6,-384.9 52.0,-382.2 63.7,-381.1 65.8,-382.9 66.2,-431.4 63.6,-433.2"/>
<polygon points="36.6,-388.4 34.9,-364.5 37.7,-361.6 51.9,-360.3 52.2,-385.6"/>
<polygon points="95.1,-505.7 88.2,-459.2 91.6,-456.0 97.3,-455.8 99.3,-458.2 101.7,-502.0 98.6,-505.7"/>
<polygon points="86.8,-459.7 83.5,-414.3 86.1,-408.7 93.7,-409.6 98.5,-452.8 94.9,-458.6"/>
<polygon points="79.2,-411.2 77.4,-396.0 88.9,-394.0 93.7,-410.4"/>
<polygon points="78.9,-395.5 76.3,-346.5 83.1,-344.7 87.8,-395.0"/>
<polygon points="72.3,-417.6 69.1,-358.5 71.5,-356.0 75.9,-356.8 79.3,-398.4 77.3,-417.2"/>
<polygon points="105.4,-462.3 101.3,-427.6 105.0,-423.7 114.5,-461.4"/>
<polygon points="100.4,-427.0 97.8,-385.2 101.0,-381.4 110.4,-382.0 112.5,-425.7"/>
<polygon points="119.3,-462.2 116.1,-422.5 125.7,-417.1 128.7,-461.7"/>
<polygon points="120.1,-420.8 119.7,-405.2 127.4,-404.3 129.3,-419.9"/>
<polygon points="100.3,-382.4 96.0,-359.0 100.6,-355.5 115.4,-354.9 118.8,-379.3 108.7,-384.4"/>
<polygon points="121.6,-406.6 119.2,-359.0 124.6,-356.6 137.9,-404.1"/>
<polygon points="6.3,-385.5 4.7,-335.2 7.8,-322.5 12.7,-317.8 32.3,-319.4 34.1,-372.2 33.7,-378.1"/>
<polygon points="5.5,-321.1 6.3,-289.2 8.8,-286.5 17.7,-287.3 20.0,-318.3 12.1,-321.5"/>
<polygon points="4.9,-540.4 4.9,-522.6 14.9,-521.2 17.8,-539.1 8.5,-540.9"/>
<polygon points="20.1,-317.3 17.8,-273.4 20.1,-271.9 23.2,-317.5"/>
<polygon points="23.8,-321.9 22.5,-273.0 25.7,-270.7 34.3,-270.4 37.4,-315.4 31.1,-320.1"/>
<polygon points="18.5,-521.7 17.5,-504.6 21.3,-504.6 24.6,-521.1"/>
<polygon points="39.1,-361.0 34.9,-345.2 37.7,-314.1 49.5,-312.0 53.1,-357.3 46.7,-361.4"/>
<polygon points="36.1,-345.6 35.0,-312.0 37.7,-310.3 38.8,-343.9"/>
<polygon points="38.1,-316.0 36.5,-269.1 40.2,-267.2 48.5,-267.0 50.1,-313.8 43.5,-316.6"/>
<polygon points="56.4,-371.5 55.5,-340.9 63.0,-340.0 68.7,-368.3"/>
<polygon points="59.8,-341.7 56.4,-304.1 63.3,-301.2 69.9,-301.6 71.8,-339.5"/>
<polygon points="54.4,-303.4 53.0,-285.9 63.3,-284.3 65.7,-301.5"/>
<polygon points="69.7,-342.5 68.0,-302.8 70.3,-299.2 88.2,-299.4 90.4,-302.8 93.1,-339.2 90.4,-341.0 71.9,-343.0"/>
<polygon points="64.5,-302.6 63.9,-273.1 66.4,-270.4 75.7,-272.0 78.3,-301.0 74.5,-303.1"/>
<polygon points="80.3,-303.2 78.7,-267.0 81.5,-265.2 90.3,-266.0 92.3,-300.0 85.8,-303.8"/>
<polygon points="63.0,-522.2 61.1,-507.2 66.0,-503.5 75.7,-504.5 78.8,-520.0 69.4,-524.0"/>
<polygon points="54.6,-506.9 53.6,-485.2 55.5,-482.5 78.7,-480.6 80.3,-499.8 78.1,-503.8 62.8,-509.2"/>
<polygon points="97.6,-358.1 95.0,-336.7 98.0,-334.8 104.0,-335.4 106.0,-354.9 103.2,-357.7"/>
<polygon points="93.8,-337.1 90.1,-277.3 94.5,-270.3 100.9,-267.6 104.6,-269.6 108.6,-328.3 104.4,-335.2"/>
<polygon points="81.3,-519.6 78.2,-485.6 81.8,-482.7 87.3,-483.3 90.9,-515.1 85.6,-519.5"/>
<polygon points="109.2,-362.3 107.0,-295.7 110.4,-292.8 117.8,-292.8 120.5,-298.0 121.8,-358.9"/>
<polygon points="92.5,-520.0 89.3,-511.1 92.7,-503.8 101.4,-500.9 105.0,-517.6"/>
<polygon points="123.1,-320.3 117.1,-294.1 122.0,-281.9 126.7,-279.7 127.3,-320.1"/>
<polygon points="108.0,-545.3 104.7,-518.0 127.7,-514.9 129.0,-532.2 118.9,-542.0"/>
<polygon points="107.3,-519.9 104.6,-468.8 109.1,-461.6 122.2,-459.1 125.9,-461.2 127.4,-519.4"/>
<polygon points="5.1,-267.2 4.5,-254.1 7.2,-251.3 17.1,-251.9 17.9,-265.9 15.1,-267.9"/>
<polygon points="9.5,-251.4 6.3,-238.5 6.2,-206.6 8.4,-204.2 21.8,-202.1 31.5,-203.1 39.1,-206.6 40.2,-210.0 42.0,-240.0 38.5,-251.8 36.3,-254.1 19.2,-256.1"/>
<polygon points="7.7,-206.3 5.4,-202.4 6.4,-171.7 9.2,-167.4 17.8,-166.9 21.5,-169.6 22.7,-173.0 21.3,-203.7 17.9,-205.5"/>
<polygon points="2.3,-172.2 -1.7,-163.9 0.1,-153.7 3.6,-150.7 10.4,-151.9 15.0,-159.2 14.7,-166.9 9.4,-171.5"/>
<polygon points="10.2,-157.3 5.7,-133.7 8.8,-133.7 14.3,-157.1"/>
<polygon points="23.4,-205.1 21.6,-200.4 22.1,-184.7 33.1,-183.6 35.0,-186.0 36.0,-204.7 33.1,-205.6"/>
<polygon points="23.7,-184.7 20.5,-166.2 20.2,-126.1 25.6,-122.1 30.4,-122.6 31.6,-126.6 32.7,-184.0 28.7,-186.0"/>
<polygon points="16.2,-166.9 14.1,-131.4 16.8,-130.7 20.1,-166.8"/>
<polygon points="22.9,-269.1 22.3,-254.1 33.4,-252.2 35.0,-268.1 31.1,-270.4"/>
<polygon points="42.2,-267.0 38.9,-258.4 40.9,-237.5 47.1,-235.0 50.3,-236.0 50.6,-264.9 47.3,-267.5"/>
<polygon points="41.1,-237.9 38.1,-220.1 38.8,-183.4 43.3,-179.6 49.6,-178.8 51.5,-181.8 53.4,-235.5 48.7,-238.5"/>
<polygon points="40.2,-179.2 37.4,-135.2 44.0,-131.7 46.5,-133.7 49.5,-178.5 44.5,-180.7"/>
<polygon points="53.7,-233.5 52.2,-181.4 54.3,-179.3 63.7,-180.3 66.6,-230.6 63.4,-232.5"/>
<polygon points="68.5,-233.6 66.7,-191.8 67.6,-189.6 81.3,-188.9 82.9,-190.5 85.1,-233.2 83.4,-234.6"/>
<polygon points="67.6,-192.4 66.0,-163.1 68.6,-160.4 78.2,-163.0 79.2,-190.4 73.3,-193.1"/>
<polygon points="52.5,-181.3 50.6,-133.6 52.0,-130.9 63.7,-129.8 65.8,-131.6 66.2,-180.1 63.6,-181.9"/>
<polygon points="36.6,-137.1 34.9,-113.2 37.7,-110.3 51.9,-109.0 52.2,-134.3"/>
<polygon points="95.1,-254.4 88.2,-207.9 91.6,-204.7 97.3,-204.5 99.3,-206.9 101.7,-250.7 98.6,-254.4"/>
<polygon points="86.8,-208.4 83.5,-163.0 86.1,-157.4 93.7,-158.3 98.5,-201.5 94.9,-207.3"/>
<polygon points="79.2,-159.9 77.4,-144.7 88.9,-142.7 93.7,-159.1"/>
<polygon points="78.9,-144.2 76.3,-95.2 83.1,-93.4 87.8,-143.7"/>
<polygon points="72.3,-166.3 69.1,-107.2 71.5,-104.7 75.9,-105.5 79.3,-147.1 77.3,-165.9"/>
<polygon points="105.4,-211.0 101.3,-176.3 105.0,-172.4 114.5,-210.1"/>
<polygon points="100.4,-175.7 97.8,-133.9 101.0,-130.1 110.4,-130.7 112.5,-174.4"/>
<polygon points="119.3,-210.9 116.1,-171.2 125.7,-165.8 128.7,-210.4"/>
<polygon points="120.1,-169.5 119.7,-153.9 127.4,-153.0 129.3,-168.6"/>
<polygon points="100.3,-131.1 96.0,-107.7 100.6,-104.2 115.4,-103.6 118.8,-128.0 108.7,-133.1"/>
<polygon points="121.6,-155.3 119.2,-107.7 124.6,-105.3 137.9,-152.8"/>
<polygon points="6.3,-134.2 4.7,-83.9 7.8,-71.2 12.7,-66.5 32.3,-68.1 34.1,-120.9 33.7,-126.8"/>
<polygon points="5.5,-69.8 6.3,-37.9 8.8,-35.2 17.7,-36.0 20.0,-67.0 12.1,-70.2"/>
<polygon points="4.9,-289.1 4.9,-271.3 14.9,-269.9 17.8,-287.8 8.5,-289.6"/>
<polygon points="20.1,-66.0 17.8,-22.1 20.1,-20.6 23.2,-66.2"/>
<polygon points="23.8,-70.6 22.5,-21.7 25.7,-19.4 34.3,-19.1 37.4,-64.1 31.1,-68.8"/>
<polygon points="18.5,-270.4 17.5,-253.3 21.3,-253.3 24.6,-269.8"/>
<polygon points="39.1,-109.7 34.9,-93.9 37.7,-62.8 49.5,-60.7 53.1,-106.0 46.7,-110.1"/>
<polygon points="36.1,-94.3 35.0,-60.7 37.7,-59.0 38.8,-92.6"/>
<polygon points="38.1,-64.7 36.5,-17.8 40.2,-15.9 48.5,-15.7 50.1,-62.5 43.5,-65.3"/>
<polygon points="56.4,-120.2 55.5,-89.6 63.0,-88.7 68.7,-117.0"/>
<polygon points="59.8,-90.4 56.4,-52.8 63.3,-49.9 69.9,-50.3 71.8,-88.2"/>
<polygon points="54.4,-52.1 53.0,-34.6 63.3,-33.0 65.7,-50.2"/>
<polygon points="69.7,-91.2 68.0,-51.5 70.3,-47.9 88.2,-48.1 90.4,-51.5 93.1,-87.9 90.4,-89.7 71.9,-91.7"/>
<polygon points="64.5,-51.3 63.9,-21.8 66.4,-19.1 75.7,-20.7 78.3,-49.7 74.5,-51.8"/>
<polygon points="80.3,-51.9 78.7,-15.7 81.5,-13.9 90.3,-14.7 92.3,-48.7 85.8,-52.5"/>
<polygon points="63.0,-270.9 61.1,-255.9 66.0,-252.2 75.7,-253.2 78.8,-268.7 69.4,-272.7"/>
<polygon points="54.6,-255.6 53.6,-233.9 55.5,-231.2 78.7,-229.3 80.3,-248.5 78.1,-252.5 62.8,-257.9"/>
<polygon points="97.6,-106.8 95.0,-85.4 98.0,-83.5 104.0,-84.1 106.0,-103.6 103.2,-106.4"/>
<polygon points="93.8,-85.8 90.1,-26.0 94.5,-19.0 100.9,-16.3 104.6,-18.3 108.6,-77.0 104.4,-83.9"/>
<polygon points="81.3,-268.3 78.2,-234.3 81.8,-231.4 87.3,-232.0 90.9,-263.8 85.6,-268.2"/>
<polygon points="109.2,-111.0 107.0,-44.4 110.4,-41.5 117.8,-41.5 120.5,-46.7 121.8,-107.6"/>
<polygon points="92.5,-268.7 89.3,-259.8 92.7,-252.5 101.4,-249.6 105.0,-266.3"/>
<polygon points="123.1,-69.0 117.1,-42.8 122.0,-30.6 126.7,-28.4 127.3,-68.8"/>
<polygon points="108.0,-294.0 104.7,-266.7 127.7,-263.6 129.0,-280.9 118.9,-290.7"/>
<polygon points="107.3,-268.6 104.6,-217.5 109.1,-210.3 122.2,-207.8 125.9,-209.9 127.4,-268.1"/>
<polygon points="5.1,-15.9 4.5,-2.8 7.2,0.0 17.1,-0.6 17.9,-14.6 15.1,-16.6"/>
<polygon points="9.5,-0.1 6.3,12.8 6.2,44.7 8.4,47.1 21.8,49.2 31.5,48.2 39.1,44.7 40.2,41.3 42.0,11.3 38.5,-0.5 36.3,-2.8 19.2,-4.8"/>
<polygon points="7.7,45.0 5.4,48.9 6.4,79.6 9.2,83.9 17.8,84.4 21.5,81.7 22.7,78.3 21.3,47.6 17.9,45.8"/>
<polygon points="2.3,79.1 -1.7,87.4 0.1,97.6 3.6,100.6 10.4,99.4 15.0,92.1 14.7,84.4 9.4,79.8"/>
<polygon points="10.2,94.0 5.7,117.6 8.8,117.6 14.3,94.2"/>
<polygon points="23.4,46.2 21.6,50.9 22.1,66.6 33.1,67.7 35.0,65.3 36.0,46.6 33.1,45.7"/>
<polygon points="23.7,66.6 20.5,85.1 20.2,125.2 25.6,129.2 30.4,128.7 31.6,124.7 32.7,67.3 28.7,65.3"/>
<polygon points="16.2,84.4 14.1,119.9 16.8,120.6 20.1,84.5"/>
<polygon points="22.9,-17.8 22.3,-2.8 33.4,-0.9 35.0,-16.8 31.1,-19.1"/>
<polygon points="42.2,-15.7 38.9,-7.1 40.9,13.8 47.1,16.3 50.3,15.3 50.6,-13.6 47.3,-16.2"/>
<polygon points="41.1,13.4 38.1,31.2 38.8,67.9 43.3,71.7 49.6,72.5 51.5,69.5 53.4,15.8 48.7,12.8"/>
<polygon points="40.2,72.1 37.4,116.1 44.0,119.6 46.5,117.6 49.5,72.8 44.5,70.6"/>
<polygon points="53.7,17.8 52.2,69.9 54.3,72.0 63.7,71.0 66.6,20.7 63.4,18.8"/>
<polygon points="68.5,17.7 66.7,59.5 67.6,61.7 81.3,62.4 82.9,60.8 85.1,18.1 83.4,16.7"/>
<polygon points="67.6,58.9 66.0,88.2 68.6,90.9 78.2,88.3 79.2,60.9 73.3,58.2"/>
<polygon points="52.5,70.0 50.6,117.7 52.0,120.4 63.7,121.5 65.8,119.7 66.2,71.2 63.6,69.4"/>
<polygon points="36.6,114.2 34.9,138.1 37.7,141.0 51.9,142.3 52.2,117.0"/>
<polygon points="95.1,-3.1 88.2,43.4 91.6,46.6 97.3,46.8 99.3,44.4 101.7,0.6 98.6,-3.1"/>
<polygon points="86.8,42.9 83.5,88.3 86.1,93.9 93.7,93.0 98.5,49.8 94.9,44.0"/>
<polygon points="79.2,91.4 77.4,106.6 88.9,108.6 93.7,92.2"/>
<polygon points="78.9,107.1 76.3,156.1 83.1,157.9 87.8,107.6"/>
<polygon points="72.3,85.0 69.1,144.1 71.5,146.6 75.9,145.8 79.3,104.2 77.3,85.4"/>
<polygon points="105.4,40.3 101.3,75.0 105.0,78.9 114.5,41.2"/>
<polygon points="100.4,75.6 97.8,117.4 101.0,121.2 110.4,120.6 112.5,76.9"/>
<polygon points="119.3,40.4 116.1,80.1 125.7,85.5 128.7,40.9"/>
<polygon points="120.1,81.8 119.7,97.4 127.4,98.3 129.3,82.7"/>
<polygon points="100.3,120.2 96.0,143.6 100.6,147.1 115.4,147.7 118.8,123.3 108.7,118.2"/>
<polygon points="121.6,96.0 119.2,143.6 124.6,146.0 137.9,98.5"/>
<polygon points="6.3,117.1 4.7,167.4 7.8,180.1 12.7,184.8 32.3,183.2 34.1,130.4 33.7,124.5"/>
<polygon points="5.5,181.5 6.3,213.4 8.8,216.1 17.7,215.3 20.0,184.3 12.1,181.1"/>
<polygon points="4.9,-37.8 4.9,-20.0 14.9,-18.6 17.8,-36.5 8.5,-38.3"/>
<polygon points="20.1,185.3 17.8,229.2 20.1,230.7 23.2,185.1"/>
<polygon points="23.8,180.7 22.5,229.6 25.7,231.9 34.3,232.2 37.4,187.2 31.1,182.5"/>
<polygon points="18.5,-19.1 17.5,-2.0 21.3,-2.0 24.6,-18.5"/>
<polygon points="39.1,141.6 34.9,157.4 37.7,188.5 49.5,190.6 53.1,145.3 46.7,141.2"/>
<polygon points="36.1,157.0 35.0,190.6 37.7,192.3 38.8,158.7"/>
<polygon points="38.1,186.6 36.5,233.5 40.2,235.4 48.5,235.6 50.1,188.8 43.5,186.0"/>
<polygon points="56.4,131.1 55.5,161.7 63.0,162.6 68.7,134.3"/>
<polygon points="59.8,160.9 56.4,198.5 63.3,201.4 69.9,201.0 71.8,163.1"/>
<polygon points="54.4,199.2 53.0,216.7 63.3,218.3 65.7,201.1"/>
<polygon points="69.7,160.1 68.0,199.8 70.3,203.4 88.2,203.2 90.4,199.8 93.1,163.4 90.4,161.6 71.9,159.6"/>
<polygon points="64.5,200.0 63.9,229.5 66.4,232.2 75.7,230.6 78.3,201.6 74.5,199.5"/>
<polygon points="80.3,199.4 78.7,235.6 81.5,237.4 90.3,236.6 92.3,202.6 85.8,198.8"/>
<polygon points="63.0,-19.6 61.1,-4.6 66.0,-0.9 75.7,-1.9 78.8,-17.4 69.4,-21.4"/>
<polygon points="54.6,-4.3 53.6,17.4 55.5,20.1 78.7,22.0 80.3,2.8 78.1,-1.2 62.8,-6.6"/>
<polygon points="97.6,144.5 95.0,165.9 98.0,167.8 104.0,167.2 106.0,147.7 103.2,144.9"/>
<polygon points="93.8,165.5 90.1,225.3 94.5,232.3 100.9,235.0 104.6,233.0 108.6,174.3 104.4,167.4"/>
<polygon points="81.3,-17.0 78.2,17.0 81.8,19.9 87.3,19.3 90.9,-12.5 85.6,-16.9"/>
<polygon points="109.2,140.3 107.0,206.9 110.4,209.8 117.8,209.8 120.5,204.6 121.8,143.7"/>
<polygon points="92.5,-17.4 89.3,-8.5 92.7,-1.2 101.4,1.7 105.0,-15.0"/>
<polygon points="123.1,182.3 117.1,208.5 122.0,220.7 126.7,222.9 127.3,182.5"/>
<polygon points="108.0,-42.7 104.7,-15.4 127.7,-12.3 129.0,-29.6 118.9,-39.4"/>
<polygon points="107.3,-17.3 104.6,33.8 109.1,41.0 122.2,43.5 125.9,41.4 127.4,-16.8"/>
<polygon points="5.1,235.4 4.5,248.5 7.2,251.3 17.1,250.7 17.9,236.7 15.1,234.7"/>
<polygon points="9.5,251.2 6.3,264.1 6.2,296.0 8.4,298.4 21.8,300.5 31.5,299.5 39.1,296.0 40.2,292.6 42.0,262.6 38.5,250.8 36.3,248.5 19.2,246.5"/>
<polygon points="7.7,296.3 5.4,300.2 6.4,330.9 9.2,335.2 17.8,335.7 21.5,333.0 22.7,329.6 21.3,298.9 17.9,297.1"/>
<polygon points="2.3,330.4 -1.7,338.7 0.1,348.9 3.6,351.9 10.4,350.7 15.0,343.4 14.7,335.7 9.4,331.1"/>
<polygon points="10.2,345.3 5.7,368.9 8.8,368.9 14.3,345.5"/>
<polygon points="23.4,297.5 21.6,302.2 22.1,317.9 33.1,319.0 35.0,316.6 36.0,297.9 33.1,297.0"/>
<polygon points="23.7,317.9 20.5,336.4 20.2,376.5 25.6,380.5 30.4,380.0 31.6,376.0 32.7,318.6 28.7,316.6"/>
<polygon points="16.2,335.7 14.1,371.2 16.8,371.9 20.1,335.8"/>
<polygon points="22.9,233.5 22.3,248.5 33.4,250.4 35.0,234.5 31.1,232.2"/>
<polygon points="42.2,235.6 38.9,244.2 40.9,265.1 47.1,267.6 50.3,266.6 50.6,237.7 47.3,235.1"/>
<polygon points="41.1,264.7 38.1,282.5 38.8,319.2 43.3,323.0 49.6,323.8 51.5,320.8 53.4,267.1 48.7,264.1"/>
<polygon points="40.2,323.4 37.4,367.4 44.0,370.9 46.5,368.9 49.5,324.1 44.5,321.9"/>
<polygon points="53.7,269.1 52.2,321.2 54.3,323.3 63.7,322.3 66.6,272.0 63.4,270.1"/>
<polygon points="68.5,269.0 66.7,310.8 67.6,313.0 81.3,313.7 82.9,312.1 85.1,269.4 83.4,268.0"/>
<polygon points="67.6,310.2 66.0,339.5 68.6,342.2 78.2,339.6 79.2,312.2 73.3,309.5"/>
<polygon points="52.5,321.3 50.6,369.0 52.0,371.7 63.7,372.8 65.8,371.0 66.2,322.5 63.6,320.7"/>
<polygon points="36.6,365.5 34.9,389.4 37.7,392.3 51.9,393.6 52.2,368.3"/>
<polygon points="95.1,248.2 88.2,294.7 91.6,297.9 97.3,298.1 99.3,295.7 101.7,251.9 98.6,248.2"/>
<polygon points="86.8,294.2 83.5,339.6 86.1,345.2 93.7,344.3 98.5,301.1 94.9,295.3"/>
<polygon points="79.2,342.7 77.4,357.9 88.9,359.9 93.7,343.5"/>
<polygon points="78.9,358.4 76.3,407.4 83.1,409.2 87.8,358.9"/>
<polygon points="72.3,336.3 69.1,395.4 71.5,397.9 75.9,397.1 79.3,355.5 77.3,336.7"/>
<polygon points="105.4,291.6 101.3,326.3 105.0,330.2 114.5,292.5"/>
<polygon points="100.4,326.9 97.8,368.7 101.0,372.5 110.4,371.9 112.5,328.2"/>
<polygon points="119.3,291.7 116.1,331.4 125.7,336.8 128.7,292.2"/>
<polygon points="120.1,333.1 119.7,348.7 127.4,349.6 129.3,334.0"/>
<polygon points="100.3,371.5 96.0,394.9 100.6,398.4 115.4,399.0 118.8,374.6 108.7,369.5"/>
<polygon points="121.6,347.3 119.2,394.9 124.6,397.3 137.9,349.8"/>
<polygon points="6.3,368.4 4.7,418.7 7.8,431.4 12.7,436.1 32.3,434.5 34.1,381.7 33.7,375.8"/>
<polygon points="5.5,432.8 6.3,464.7 8.8,467.4 17.7,466.6 20.0,435.6 12.1,432.4"/>
<polygon points="4.9,213.5 4.9,231.3 14.9,232.7 17.8,214.8 8.5,213.0"/>
<polygon points="20.1,436.6 17.8,480.5 20.1,482.0 23.2,436.4"/>
<polygon points="23.8,432.0 22.5,480.9 25.7,483.2 34.3,483.5 37.4,438.5 31.1,433.8"/>
<polygon points="18.5,232.2 17.5,249.3 21.3,249.3 24.6,232.8"/>
<polygon points="39.1,392.9 34.9,408.7 37.7,439.8 49.5,441.9 53.1,396.6 46.7,392.5"/>
<polygon points="36.1,408.3 35.0,441.9 37.7,443.6 38.8,410.0"/>
<polygon points="38.1,437.9 36.5,484.8 40.2,486.7 48.5,486.9 50.1,440.1 43.5,437.3"/>
<polygon points="56.4,382.4 55.5,413.0 63.0,413.9 68.7,385.6"/>
<polygon points="59.8,412.2 56.4,449.8 63.3,452.7 69.9,452.3 71.8,414.4"/>
<polygon points="54.4,450.5 53.0,468.0 63.3,469.6 65.7,452.4"/>
<polygon points="69.7,411.4 68.0,451.1 70.3,454.7 88.2,454.5 90.4,451.1 93.1,414.7 90.4,412.9 71.9,410.9"/>
<polygon points="64.5,451.3 63.9,480.8 66.4,483.5 75.7,481.9 78.3,452.9 74.5,450.8"/>
<polygon points="80.3,450.7 78.7,486.9 81.5,488.7 90.3,487.9 92.3,453.9 85.8,450.1"/>
<polygon points="63.0,231.7 61.1,246.7 66.0,250.4 75.7,249.4 78.8,233.9 69.4,229.9"/>
<polygon points="54.6,247.0 53.6,268.7 55.5,271.4 78.7,273.3 80.3,254.1 78.1,250.1 62.8,244.7"/>
<polygon points="97.6,395.8 95.0,417.2 98.0,419.1 104.0,418.5 106.0,399.0 103.2,396.2"/>
<polygon points="93.8,416.8 90.1,476.6 94.5,483.6 100.9,486.3 104.6,484.3 108.6,425.6 104.4,418.7"/>
<polygon points="81.3,234.3 78.2,268.3 81.8,271.2 87.3,270.6 90.9,238.8 85.6,234.4"/>
<polygon points="109.2,391.6 107.0,458.2 110.4,461.1 117.8,461.1 120.5,455.9 121.8,395.0"/>
<polygon points="92.5,233.9 89.3,242.8 92.7,250.1 101.4,253.0 105.0,236.3"/>
<polygon points="123.1,433.6 117.1,459.8 122.0,472.0 126.7,474.2 127.3,433.8"/>
<polygon points="108.0,208.6 104.7,235.9 127.7,239.0 129.0,221.7 118.9,211.9"/>
<polygon points="107.3,234.0 104.6,285.1 109.1,292.3 122.2,294.8 125.9,292.7 127.4,234.5"/>
<polygon points="5.1,486.7 4.5,499.8 7.2,502.6 17.1,502.0 17.9,488.0 15.1,486.0"/>
<polygon points="9.5,502.5 6.3,515.4 6.2,547.3 8.4,549.7 21.8,551.8 31.5,550.8 39.1,547.3 40.2,543.9 42.0,513.9 38.5,502.1 36.3,499.8 19.2,497.8"/>
<polygon points="7.7,547.6 5.4,551.5 6.4,582.2 9.2,586.5 17.8,587.0 21.5,584.3 22.7,580.9 21.3,550.2 17.9,548.4"/>
<polygon points="2.3,581.7 -1.7,590.0 0.1,600.2 3.6,603.2 10.4,602.0 15.0,594.7 14.7,587.0 9.4,582.4"/>
<polygon points="10.2,596.6 5.7,620.2 8.8,620.2 14.3,596.8"/>
<polygon points="23.4,548.8 21.6,553.5 22.1,569.2 33.1,570.3 35.0,567.9 36.0,549.2 33.1,548.3"/>
<polygon points="23.7,569.2 20.5,587.7 20.2,627.8 25.6,631.8 30.4,631.3 31.6,627.3 32.7,569.9 28.7,567.9"/>
<polygon points="16.2,587.0 14.1,622.5 16.8,623.2 20.1,587.1"/>
<polygon points="22.9,484.8 22.3,499.8 33.4,501.7 35.0,485.8 31.1,483.5"/>
<polygon points="42.2,486.9 38.9,495.5 40.9,516.4 47.1,518.9 50.3,517.9 50.6,489.0 47.3,486.4"/>
<polygon points="41.1,516.0 38.1,533.8 38.8,570.5 43.3,574.3 49.6,575.1 51.5,572.1 53.4,518.4 48.7,515.4"/>
<polygon points="40.2,574.7 37.4,618.7 44.0,622.2 46.5,620.2 49.5,575.4 44.5,573.2"/>
<polygon points="53.7,520.4 52.2,572.5 54.3,574.6 63.7,573.6 66.6,523.3 63.4,521.4"/>
<polygon points="68.5,520.3 66.7,562.1 67.6,564.3 81.3,565.0 82.9,563.4 85.1,520.7 83.4,519.3"/>
<polygon points="67.6,561.5 66.0,590.8 68.6,593.5 78.2,590.9 79.2,563.5 73.3,560.8"/>
<polygon points="52.5,572.6 50.6,620.3 52.0,623.0 63.7,624.1 65.8,622.3 66.2,573.8 63.6,572.0"/>
<polygon points="36.6,616.8 34.9,640.7 37.7,643.6 51.9,644.9 52.2,619.6"/>
<polygon points="95.1,499.5 88.2,546.0 91.6,549.2 97.3,549.4 99.3,547.0 101.7,503.2 98.6,499.5"/>
<polygon points="86.8,545.5 83.5,590.9 86.1,596.5 93.7,595.6 98.5,552.4 94.9,546.6"/>
<polygon points="79.2,594.0 77.4,609.2 88.9,611.2 93.7,594.8"/>
<polygon points="78.9,609.7 76.3,658.7 83.1,660.5 87.8,610.2"/>
<polygon points="72.3,587.6 69.1,646.7 71.5,649.2 75.9,648.4 79.3,606.8 77.3,588.0"/>
<polygon points="105.4,542.9 101.3,577.6 105.0,581.5 114.5,543.8"/>
<polygon points="100.4,578.2 97.8,620.0 101.0,623.8 110.4,623.2 112.5,579.5"/>
<polygon points="119.3,543.0 116.1,582.7 125.7,588.1 128.7,543.5"/>
<polygon points="120.1,584.4 119.7,600.0 127.4,600.9 129.3,585.3"/>
<polygon points="100.3,622.8 96.0,646.2 100.6,649.7 115.4,650.3 118.8,625.9 108.7,620.8"/>
<polygon points="121.6,598.6 119.2,646.2 124.6,648.6 137.9,601.1"/>
<polygon points="6.3,619.7 4.7,670.0 7.8,682.7 12.7,687.4 32.3,685.8 34.1,633.0 33.7,627.1"/>
<polygon points="5.5,684.1 6.3,716.0 8.8,718.7 17.7,717.9 20.0,686.9 12.1,683.7"/>
<polygon points="4.9,464.8 4.9,482.6 14.9,484.0 17.8,466.1 8.5,464.3"/>
<polygon points="20.1,687.9 17.8,731.8 20.1,733.3 23.2,687.7"/>
<polygon points="23.8,683.3 22.5,732.2 25.7,734.5 34.3,734.8 37.4,689.8 31.1,685.1"/>
<polygon points="18.5,483.5 17.5,500.6 21.3,500.6 24.6,484.1"/>
<polygon points="39.1,644.2 34.9,660.0 37.7,691.1 49.5,693.2 53.1,647.9 46.7,643.8"/>
<polygon points="36.1,659.6 35.0,693.2 37.7,694.9 38.8,661.3"/>
<polygon points="38.1,689.2 36.5,736.1 40.2,738.0 48.5,738.2 50.1,691.4 43.5,688.6"/>
<polygon points="56.4,633.7 55.5,664.3 63.0,665.2 68.7,636.9"/>
<polygon points="59.8,663.5 56.4,701.1 63.3,704.0 69.9,703.6 71.8,665.7"/>
<polygon points="54.4,701.8 53.0,719.3 63.3,720.9 65.7,703.7"/>
<polygon points="69.7,662.7 68.0,702.4 70.3,706.0 88.2,705.8 90.4,702.4 93.1,666.0 90.4,664.2 71.9,662.2"/>
<polygon points="64.5,702.6 63.9,732.1 66.4,734.8 75.7,733.2 78.3,704.2 74.5,702.1"/>
<polygon points="80.3,702.0 78.7,738.2 81.5,740.0 90.3,739.2 92.3,705.2 85.8,701.4"/>
<polygon points="63.0,483.0 61.1,498.0 66.0,501.7 75.7,500.7 78.8,485.2 69.4,481.2"/>
<polygon points="54.6,498.3 53.6,520.0 55.5,522.7 78.7,524.6 80.3,505.4 78.1,501.4 62.8,496.0"/>
<polygon points="97.6,647.1 95.0,668.5 98.0,670.4 104.0,669.8 106.0,650.3 103.2,647.5"/>
<polygon points="93.8,668.1 90.1,727.9 94.5,734.9 100.9,737.6 104.6,735.6 108.6,676.9 104.4,670.0"/>
<polygon points="81.3,485.6 78.2,519.6 81.8,522.5 87.3,521.9 90.9,490.1 85.6,485.7"/>
<polygon points="109.2,642.9 107.0,709.5 110.4,712.4 117.8,712.4 120.5,707.2 121.8,646.3"/>
<polygon points="92.5,485.2 89.3,494.1 92.7,501.4 101.4,504.3 105.0,487.6"/>
<polygon points="123.1,684.9 117.1,711.1 122.0,723.3 126.7,725.5 127.3,685.1"/>
<polygon points="108.0,459.9 104.7,487.2 127.7,490.3 129.0,473.0 118.9,463.2"/>
<polygon points="107.3,485.3 104.6,536.4 109.1,543.6 122.2,546.1 125.9,544.0 127.4,485.8"/>
</g>
<path d="M127.5,0 V127.5" stroke="#333" stroke-width="1" stroke-dasharray="1.5 1.5" fill="none"/>
<path d="M0,500 V0 H127.5 M127.5,127.5 V500" stroke="#1f5fff" stroke-width="1.6" fill="none"/>
<rect x="505.6" y="127.5" width="21.2" height="300" fill="#c0c0c0" stroke="#111" stroke-width="1"/>
<rect x="789.5" y="127.5" width="100" height="300" fill="#c0c0c0" stroke="#111" stroke-width="1"/>
<rect x="258.8" y="325.4" width="100" height="100" fill="#c0c0c0" stroke="#111" stroke-width="1"/>
<rect x="600" y="-400" width="300" height="128.5" fill="#c0c0c0" stroke="#111" stroke-width="1"/>
</g>
<path d="M989,495.5 L982.5,500 L971.5,539 M989.5,506 L979,539" stroke="#111" stroke-width="1" fill="none"/>
</g></svg><div class="a" style="left:384.5px;top:63px;width:143px;height:121.5px;background:#fff;border:1px solid #7aa6f5;border-radius:5px;box-sizing:border-box"></div>
<div class="tt" style="left:387.5px;top:67.2px;font-weight:bold;letter-spacing:0">Wall</div>
<div class="tt" style="left:387.5px;top:80.0px;letter-spacing:-0.38px">Structure: GENERIC_STONE_WALL</div>
<div class="tt" style="left:387.5px;top:92.4px;letter-spacing:-0.15px">Base Elevation: 0,00</div>
<div class="tt" style="left:387.5px;top:104.8px;letter-spacing:-0.19px">Thickness: 0,75</div>
<div class="tt" style="left:387.5px;top:117.2px;letter-spacing:0.2px">Height: Not linked</div>
<div class="tt" style="left:387.5px;top:129.6px;letter-spacing:-0.23px">Layer: 3D_ΠΕΤΡΙΝΟΙ ΤΟΙΧΟΙ</div>
<div class="tt" style="left:387.5px;top:142.0px;letter-spacing:-0.07px">Graphic Overrides:</div>
<div class="tt" style="left:387.5px;top:154.4px;letter-spacing:-0.19px">ΠΕΤΡΙΝΟΙ ΤΟΙΧΟΙ</div>
<div class="a" style="left:387px;top:167px;width:136px;height:1px;background:#7aa6f5"></div>
<div class="tt" style="left:389.5px;top:169px">Multiple Elements (TAB)</div>
<div class="a" style="left:715px;top:81.5px;width:266px;height:30.5px;background:#f0f0f0;border:1px solid #b9b9b9;box-sizing:border-box"></div>
<div class="a" style="left:716.5px;top:83.5px;width:9.5px;height:9px;background:#d9534f"></div>
<div class="a" style="left:718.5px;top:82px;color:#fff;font-size:9px;line-height:12px;font-weight:bold">×</div>
<div class="a" style="left:720.5px;top:96px;width:1px;height:13px;background:#8a8a8a"></div>
<div class="a" style="left:789.5px;top:84px;width:1px;height:25px;background:#a8a8a8"></div>
<div class="a" style="left:870.5px;top:84px;width:1px;height:25px;background:#a8a8a8"></div>
<div class="a" style="left:950.5px;top:84px;width:1px;height:25px;background:#a8a8a8"></div>
<div class="t" style="left:792px;top:85px;letter-spacing:-0.3px;color:#222">Selection’s Layer:</div>
<div class="t" style="left:872.5px;top:85px;letter-spacing:-0.1px;color:#222">All Layers:</div>
<svg class="a" style="left:0;top:0" width="998" height="120">
<g fill="none" stroke="#333" stroke-width="1.1">
<path d="M741.5,91.5 q5.2,-4.5 10.4,0 q-5.2,4.5 -10.4,0z"/>
<path d="M753,92 q4,2 2,6.5 M754,91 l-1,1.5 l1.8,0.5 M755,96.5 q-1,3 -4,3.5 M752.5,98 l-1.5,1.5 l1.5,1.3"/>
<g transform="translate(0,2)"><path d="M767.5,94 v-2 a2.5,2.5 0 0 1 5,0 v2 M774,90 v-2 a2.5,2.5 0 0 1 5,0 v2"/>
<rect x="766.5" y="94" width="7" height="8" rx="2"/><rect x="773" y="90" width="7" height="7.5" rx="2"/>
<path d="M775,102 q3,0 4,-3 M777.5,99 l1.5,-0.3 l0.3,1.6"/></g>
<path d="M970,91.5 a4,4 0 0 0 -8,0 M968,90.5 l2,1 l1,-2.2" stroke="#bbb"/>
<path d="M962,98 a4,4 0 0 1 8,0 M964,97 l-2,1 l-1,-2.2" stroke="#bbb"/>
</g>
<circle cx="746.7" cy="91.5" r="1.6" fill="#333"/><path d="M770,99 v2 M776.5,95 v2" stroke="#333" stroke-width="1"/>
<path d="M741,101 q5.7,-5 11.4,0 q-5.7,5 -11.4,0z" fill="#1e1e1e"/>
<g fill="none" stroke="#c2c2c2" stroke-width="1.2">
<path d="M798.5,103 q5.5,-4.3 11,0 q-5.5,4.3 -11,0z"/>
<rect x="827.5" y="101.5" width="5" height="5.5" rx="1.5"/><path d="M828.5,101.5 v-1.3 a1.5,1.5 0 0 1 3,0 v1.3"/>
<rect x="853" y="102" width="5" height="5.5" rx="1.5"/><path d="M851,101.5 v-1.3 a1.5,1.5 0 0 1 3,0"/>
</g>
<path d="M879,103.2 q6.2,-5 12.4,0 q-6.2,5 -12.4,0z" fill="#f4f4f4" stroke="#1e1e1e" stroke-width="2"/>
<g fill="none" stroke="#2a2a2a" stroke-width="1.2"><rect x="908.5" y="102" width="5.5" height="6" rx="1.5"/><path d="M909.5,102 v-1.5 a1.75,1.75 0 0 1 3.5,0 v1.5"/></g>
</svg></body></html>
